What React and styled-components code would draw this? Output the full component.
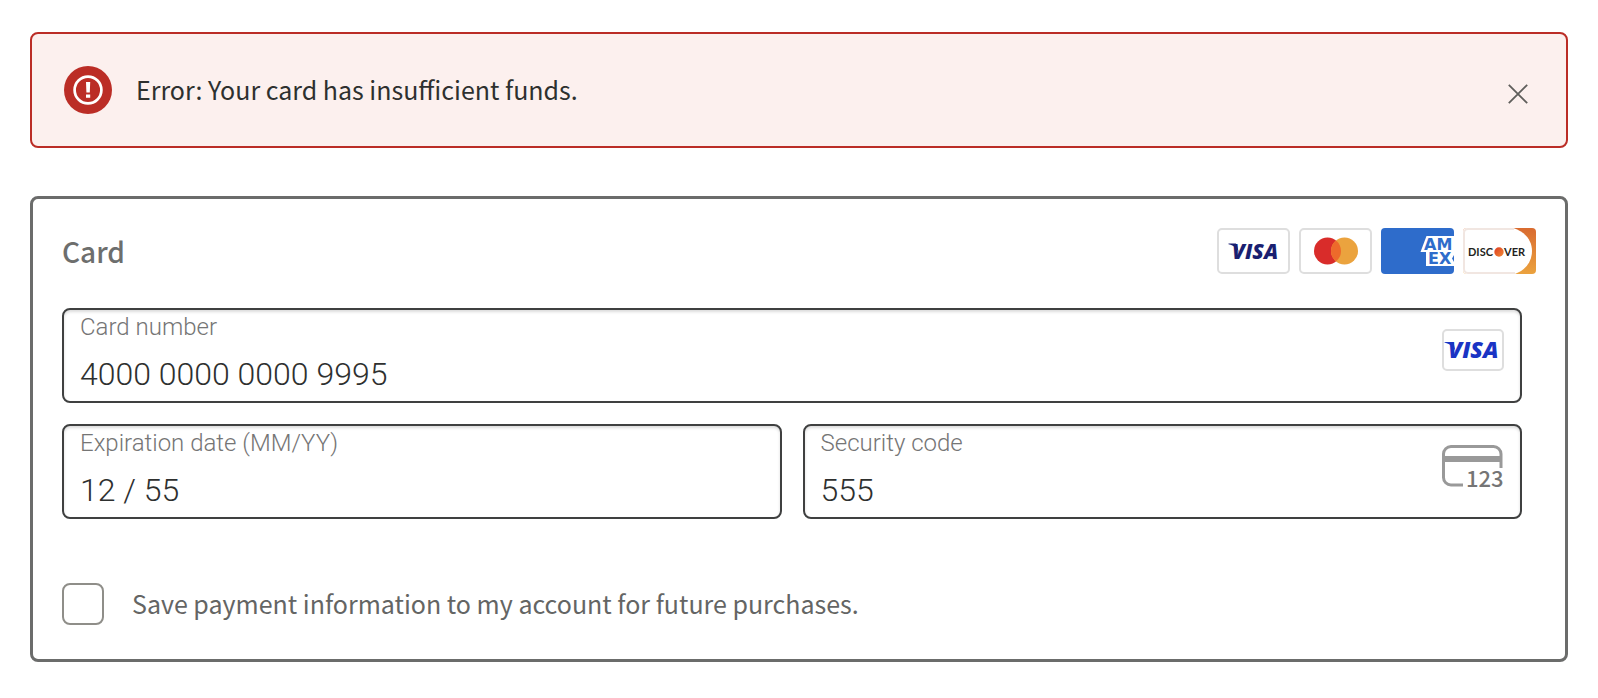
import React, { useState } from 'react'
import styled, { createGlobalStyle } from 'styled-components'

function App() {
    const [showError, setShowError] = useState(true)

    return (
        <Page>
            <GlobalStyle />
            {showError && (
                <Alert role="alert">
                    <ErrorIcon />
                    <AlertText>Error: Your card has insufficient funds.</AlertText>
                    <CloseButton type="button" aria-label="Close" onClick={() => setShowError(false)}>
                        <CloseIcon />
                    </CloseButton>
                </Alert>
            )}
            <Card>
                <CardHeader>
                    <Title>Card</Title>
                    <Brands>
                        <VisaLogo />
                        <MastercardLogo />
                        <AmexLogo />
                        <DiscoverLogo />
                    </Brands>
                </CardHeader>
                <Fields>
                    <TextField id="number" label="Card number" value="4000 0000 0000 9995" wide icon={<VisaFieldIcon />} />
                    <TextField id="expiry" label="Expiration date (MM/YY)" value="12 / 55" />
                    <TextField id="cvc" label="Security code" value="555" icon={<CvcIcon />} />
                </Fields>
                <SaveRow>
                    <Checkbox type="checkbox" id="save" />
                    <SaveLabel htmlFor="save">
                        Save payment information to my account for future purchases.
                    </SaveLabel>
                </SaveRow>
            </Card>
        </Page>
    )
}

export default App

function TextField({ id, label, value, wide, icon }) {
    return (
        <Field $wide={wide}>
            <FieldText>
                <FieldLabel htmlFor={id}>{label}</FieldLabel>
                <FieldInput type="text" id={id} defaultValue={value} />
            </FieldText>
            {icon}
        </Field>
    )
}

function ErrorIcon() {
    return (
        <svg width="48" height="48" viewBox="0 0 48 48" aria-hidden="true">
            <circle cx="24" cy="24" r="24" fill="#bb2d26" />
            <circle cx="24" cy="24" r="13.4" fill="none" stroke="#fff" strokeWidth="2.7" />
            <path d="M22 16h4.2l-.4 10.4h-3.4zM22 28.4h4.2v3.4h-4.2z" fill="#fff" />
        </svg>
    )
}

function CloseIcon() {
    return (
        <svg width="20" height="20" viewBox="0 0 20 20" aria-hidden="true">
            <path d="M.8.8l18.4 18.4M19.2.8L.8 19.2" stroke="#5f5e5b" strokeWidth="1.8" />
        </svg>
    )
}

function VisaLogo() {
    return (
        <svg width="73" height="46" viewBox="0 0 73 46" role="img">
            <rect x="1" y="1" width="71" height="44" rx="4" fill="#fff" stroke="#dedede" strokeWidth="2" />
            <VisaMark x="15" y="31" fontSize="21" fill="#1a1f71">VISA</VisaMark>
            <path d="M11.5 15.6h6.4c1.2 0 1.9.6 2.2 1.8l1.8 7.6c-1.5-4.4-4.6-7.4-10.4-8.8z" fill="#1a1f71" />
        </svg>
    )
}

function MastercardLogo() {
    return (
        <svg width="73" height="46" viewBox="0 0 73 46" aria-hidden="true">
            <rect x="1" y="1" width="71" height="44" rx="4" fill="#fff" stroke="#dedede" strokeWidth="2" />
            <circle cx="28.5" cy="23" r="13.5" fill="#d92c2a" />
            <circle cx="45.5" cy="23" r="13.5" fill="#eba33e" />
            <path d="M37 12.5a13.5 13.5 0 0 1 0 21a13.5 13.5 0 0 1 0-21z" fill="#ed6a2b" />
        </svg>
    )
}

function AmexLogo() {
    return (
        <svg width="73" height="46" viewBox="0 0 73 46" role="img">
            <defs>
                <clipPath id="amexClip">
                    <rect width="73" height="46" rx="4" />
                </clipPath>
            </defs>
            <g clipPath="url(#amexClip)">
                <rect width="73" height="46" fill="#2e6ccb" />
                {/* white backing behind the letters */}
                <path d="M45.5 8H73v30H45V24h-5.500z" fill="#fff" />
                <AmexMark x="43" y="22">AM</AmexMark>
                <AmexMark x="47" y="36">EX</AmexMark>
                <path d="M73 27l-2 3.500 2 3.500z" fill="#2e6ccb" />
            </g>
        </svg>
    )
}

function DiscoverLogo() {
    return (
        <svg width="73" height="46" viewBox="0 0 73 46" role="img">
            <defs>
                <clipPath id="discoverClip">
                    <rect width="73" height="46" rx="4" />
                </clipPath>
                <linearGradient id="discoverEdge" x1="0" y1="0" x2="0" y2="1">
                    <stop offset="0" stopColor="#d96b30" />
                    <stop offset="1" stopColor="#eba23e" />
                </linearGradient>
                <linearGradient id="discoverBall" x1="0" y1="0" x2="1" y2="1">
                    <stop offset="0" stopColor="#dd3b22" />
                    <stop offset="1" stopColor="#f08a35" />
                </linearGradient>
            </defs>
            <g clipPath="url(#discoverClip)">
                <rect width="73" height="46" fill="url(#discoverEdge)" />
                <path d="M0 0h50.5c11 3.5 18.5 12 18.5 23s-7 19.5-17 23H0z" fill="#fff" />
            </g>
            <path d="M51 1H5a4 4 0 0 0-4 4v36a4 4 0 0 0 4 4h47" fill="none" stroke="#f1e6e1" strokeWidth="2" />
            <DiscoverMark x="5" y="28">DISC</DiscoverMark>
            <circle cx="36" cy="24" r="4.7" fill="url(#discoverBall)" />
            <DiscoverMark x="41" y="28">VER</DiscoverMark>
        </svg>
    )
}

function VisaFieldIcon() {
    return (
        <svg width="62" height="42" viewBox="0 0 62 42" role="img">
            <rect x="1" y="1" width="60" height="40" rx="4" fill="#fff" stroke="#dedede" strokeWidth="2" />
            <VisaMark x="6" y="29" fontSize="23" fill="#1a34c4">VISA</VisaMark>
            <path d="M2.5 13h7c1.3 0 2 .6 2.3 1.9l1.9 8.1c-1.6-4.7-5-7.9-11.2-9.4z" fill="#1a34c4" />
        </svg>
    )
}

function CvcIcon() {
    return (
        <CvcSvg width="62" height="42" viewBox="0 0 62 42" role="img">
            <path d="M21 40H9a7.5 7.5 0 0 1-7.5-7.5V9A7.5 7.5 0 0 1 9 1.500h42.500A7.500 7.500 0 0 1 59 9v14" fill="none" stroke="#999" strokeWidth="3" />
            <path d="M1 11h59v6H1z" fill="#999" />
            <CvcDigits x="24" y="42">123</CvcDigits>
        </CvcSvg>
    )
}

const GlobalStyle = createGlobalStyle`
    *{
        box-sizing: border-box;
    }
    body{
        margin: 0;
        background: #fff;
        font-family: "Noto Sans CJK SC", "Noto Sans", sans-serif;
    }
`

const Page = styled.main`
    padding: 32px 30px;
    display: flex;
    flex-direction: column;
    gap: 48px;
`

const Alert = styled.div`
    display: flex;
    align-items: center;
    gap: 24px;
    padding: 32px;
    border: 2px solid #bb2d26;
    border-radius: 8px;
    background: #fcf0ee;
`

const AlertText = styled.p`
    flex: 1;
    margin: 0;
    padding-bottom: 2px;
    font-size: 25px;
    line-height: 36px;
    color: #2e302f;
`

const CloseButton = styled.button`
    display: flex;
    align-items: center;
    justify-content: center;
    width: 32px;
    height: 32px;
    margin-top: 8px;
    padding: 0;
    border: none;
    background: transparent;
    cursor: pointer;
`

const Card = styled.section`
    padding: 29px 29px 34px;
    border: 3px solid #6b6c6b;
    border-radius: 8px;
`

const CardHeader = styled.header`
    display: flex;
    align-items: center;
    justify-content: space-between;
`

const Title = styled.h2`
    margin: 0;
    font-size: 28px;
    font-weight: 500;
    line-height: 36px;
    color: #6d6e6d;
`

const Brands = styled.div`
    display: flex;
    gap: 9px;
`

/* lettering inside the brand drawings */
const VisaMark = styled.text`
    font-family: "Open Sans", sans-serif;
    font-weight: 800;
    font-style: italic;
`

const AmexMark = styled.text`
    font-family: "DejaVu Sans", sans-serif;
    font-size: 16px;
    font-weight: 700;
    fill: #2e6ccb;
`

const DiscoverMark = styled.text`
    font-family: Lato, sans-serif;
    font-size: 11px;
    font-weight: 700;
    fill: #231f20;
`

const CvcSvg = styled.svg`
    overflow: visible;
`

const CvcDigits = styled.text`
    font-family: "Noto Sans CJK SC", sans-serif;
    font-size: 22px;
    font-weight: 500;
    fill: #757575;
`

/* the first field takes the full row, the others share the second */
const Fields = styled.div`
    display: grid;
    grid-template-columns: 1fr 1fr;
    gap: 21px;
    margin-top: 34px;
    padding-right: 14px;
`

const Field = styled.div`
    grid-column: ${(props) => (props.$wide ? '1 / -1' : 'auto')};
    display: flex;
    align-items: flex-start;
    padding: 4px 16px 7px;
    border: 2px solid #3f4040;
    border-radius: 8px;
    box-shadow: inset 0 2px 3px rgb(0 0 0 / 14%);
    > svg{
        flex: none;
        margin-top: 15px;
    }
`

const FieldText = styled.div`
    flex: 1;
    min-width: 0;
    display: flex;
    flex-direction: column;
    gap: 14px;
`

const FieldLabel = styled.label`
    font-family: Roboto, "Liberation Sans", sans-serif;
    font-size: 24px;
    font-weight: 300;
    line-height: 26px;
    color: #757575;
`

const FieldInput = styled.input`
    width: 100%;
    height: 40px;
    padding: 0;
    border: none;
    outline: none;
    background: transparent;
    font-family: Roboto, "Liberation Sans", sans-serif;
    font-size: 32px;
    font-weight: 300;
    line-height: 40px;
    color: #2e302f;
`

const SaveRow = styled.div`
    display: flex;
    align-items: center;
    gap: 28px;
    margin-top: 64px;
`

const Checkbox = styled.input`
    appearance: none;
    width: 42px;
    height: 42px;
    margin: 0;
    border: 2px solid #8f8e89;
    border-radius: 8px;
    background: #fff;
    &:checked{
        background: #6b6c6b;
    }
`

const SaveLabel = styled.label`
    padding-bottom: 2px;
    font-size: 25px;
    line-height: 36px;
    color: #646564;
`
